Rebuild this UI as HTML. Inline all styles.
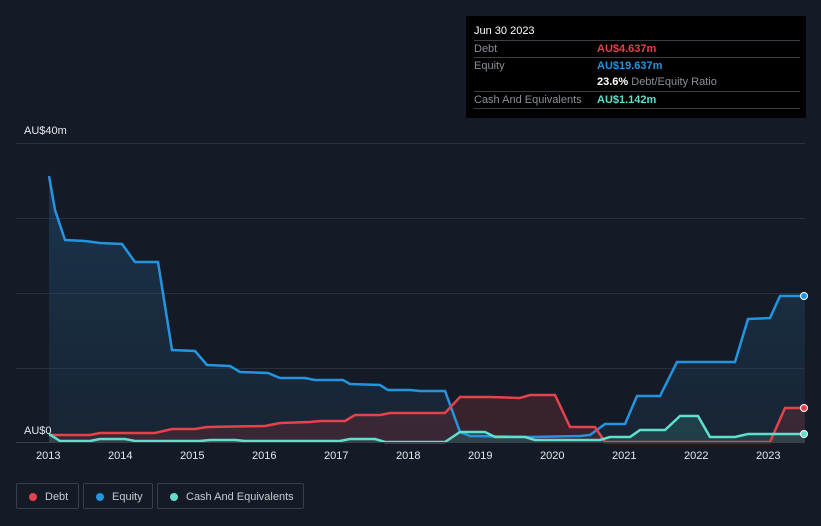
<!DOCTYPE html><html><head><style>
body{margin:0;width:821px;height:526px;background:#151b26;font-family:"Liberation Sans",sans-serif;overflow:hidden;position:relative}
.tt{position:absolute;left:466px;top:16px;width:340px;height:102px;background:#000;font-size:11px;color:#8a8f98}
.tt .r{position:absolute;left:8px;width:326px;border-top:1px solid #3a3f47;height:17px;line-height:17px}
.tt b{position:absolute;left:123px;font-weight:bold}
.leg{position:absolute;top:483px;height:26px;border:1px solid #3a3f47;border-radius:2px;color:#c8cbd0;font-size:11px;line-height:26px;box-sizing:border-box}
.leg i{position:absolute;left:12px;top:9px;width:8px;height:8px;border-radius:50%}
.ax{position:absolute;color:#e6e8eb;font-size:11px}
</style></head><body>
<svg width="821" height="526" style="position:absolute;left:0;top:0">
<defs><linearGradient id="g" x1="0" y1="0" x2="0" y2="1"><stop offset="0" stop-color="#1e4a6e" stop-opacity=".55"/><stop offset="1" stop-color="#1e3a55" stop-opacity=".3"/></linearGradient></defs>
<g stroke="#2b313c" stroke-width="1"><line x1="16" y1="143.5" x2="805" y2="143.5"/><line x1="16" y1="218.5" x2="805" y2="218.5"/><line x1="16" y1="293.5" x2="805" y2="293.5"/><line x1="16" y1="368.5" x2="805" y2="368.5"/></g>
<path d="M49,176 L55,210 L65,240 L85,241 L100,243 L122,244 L135,262 L158,262 L172,350 L195,351 L207,365 L230,366 L240,372 L268,373 L280,378 L305,378 L315,380 L343,380 L350,384 L380,385 L388,390 L410,390 L420,391 L445,391 L452,410 L460,432 L470,436 L530,437 L580,436 L590,435 L605,424 L625,424 L637,396 L660,396 L677,362 L735,362 L748,319 L770,318 L780,296 L805,296 L805,442 L49,442Z" fill="url(#g)"/>
<path d="M49,435 L90,435 L100,433 L155,433 L172,429 L195,429 L207,427 L265,426 L280,423 L310,422 L320,421 L345,421 L355,415 L380,415 L390,413 L445,413 L460,397 L490,397 L520,398 L530,395 L555,395 L570,427 L595,427 L605,442 L770,442 L785,408 L805,408 L805,442 L49,442Z" fill="#5a2a35" fill-opacity=".5"/>
<path d="M49,434 L60,441 L90,441 L100,439 L125,439 L135,441 L200,441 L210,440 L235,440 L245,441 L340,441 L350,439 L375,439 L385,442 L445,442 L460,432 L485,432 L495,437 L525,437 L535,440 L600,440 L610,437 L630,437 L640,430 L665,430 L680,416 L698,416 L710,437 L735,437 L748,434 L805,434 L805,442 L49,442Z" fill="#2a6a66" fill-opacity=".4"/>
<path d="M49,176 L55,210 L65,240 L85,241 L100,243 L122,244 L135,262 L158,262 L172,350 L195,351 L207,365 L230,366 L240,372 L268,373 L280,378 L305,378 L315,380 L343,380 L350,384 L380,385 L388,390 L410,390 L420,391 L445,391 L452,410 L460,432 L470,436 L530,437 L580,436 L590,435 L605,424 L625,424 L637,396 L660,396 L677,362 L735,362 L748,319 L770,318 L780,296 L805,296" fill="none" stroke="#2394e0" stroke-width="2.5"/>
<path d="M49,435 L90,435 L100,433 L155,433 L172,429 L195,429 L207,427 L265,426 L280,423 L310,422 L320,421 L345,421 L355,415 L380,415 L390,413 L445,413 L460,397 L490,397 L520,398 L530,395 L555,395 L570,427 L595,427 L605,442 L770,442 L785,408 L805,408" fill="none" stroke="#e5434b" stroke-width="2.5"/>
<path d="M49,434 L60,441 L90,441 L100,439 L125,439 L135,441 L200,441 L210,440 L235,440 L245,441 L340,441 L350,439 L375,439 L385,442 L445,442 L460,432 L485,432 L495,437 L525,437 L535,440 L600,440 L610,437 L630,437 L640,430 L665,430 L680,416 L698,416 L710,437 L735,437 L748,434 L805,434" fill="none" stroke="#5fe0cc" stroke-width="2.5"/>
<line x1="16" y1="442.5" x2="805" y2="442.5" stroke="#3a3f47"/>
<circle cx="804" cy="296" r="3.5" fill="#2394e0" stroke="#fff"/><circle cx="804" cy="408" r="3.5" fill="#e5434b" stroke="#fff"/><circle cx="804" cy="434" r="3.5" fill="#5fe0cc" stroke="#fff"/>
</svg>
<div class="ax" style="left:24px;top:125px">AU$40m</div>
<div class="ax" style="left:24px;top:425px">AU$0</div>
<div class="ax" style="left:36px;top:450px">2013</div><div class="ax" style="left:108px;top:450px">2014</div><div class="ax" style="left:180px;top:450px">2015</div><div class="ax" style="left:252px;top:450px">2016</div><div class="ax" style="left:324px;top:450px">2017</div><div class="ax" style="left:396px;top:450px">2018</div><div class="ax" style="left:468px;top:450px">2019</div><div class="ax" style="left:540px;top:450px">2020</div><div class="ax" style="left:612px;top:450px">2021</div><div class="ax" style="left:684px;top:450px">2022</div><div class="ax" style="left:756px;top:450px">2023</div>
<div class="tt">
<div style="position:absolute;left:8px;top:9px;color:#fff">Jun 30 2023</div>
<div class="r" style="top:24px">Debt<b style="color:#e5434b">AU$4.637m</b></div>
<div class="r" style="top:41px">Equity<b style="color:#2394e0">AU$19.637m</b></div>
<div class="r" style="top:58px;border-top:none"><b style="color:#fff">23.6% <span style="font-weight:normal;color:#8a8f98">Debt/Equity Ratio</span></b></div>
<div class="r" style="top:75px">Cash And Equivalents<b style="color:#5fe0cc">AU$1.142m</b></div>
<div class="r" style="top:92px;height:0"></div>
</div>
<div class="leg" style="left:16px;width:63px;padding-left:28px"><i style="background:#e5434b"></i>Debt</div>
<div class="leg" style="left:83px;width:70px;padding-left:28px"><i style="background:#2394e0"></i>Equity</div>
<div class="leg" style="left:157px;width:147px;padding-left:28px"><i style="background:#5fe0cc"></i>Cash And Equivalents</div>
</body></html>
